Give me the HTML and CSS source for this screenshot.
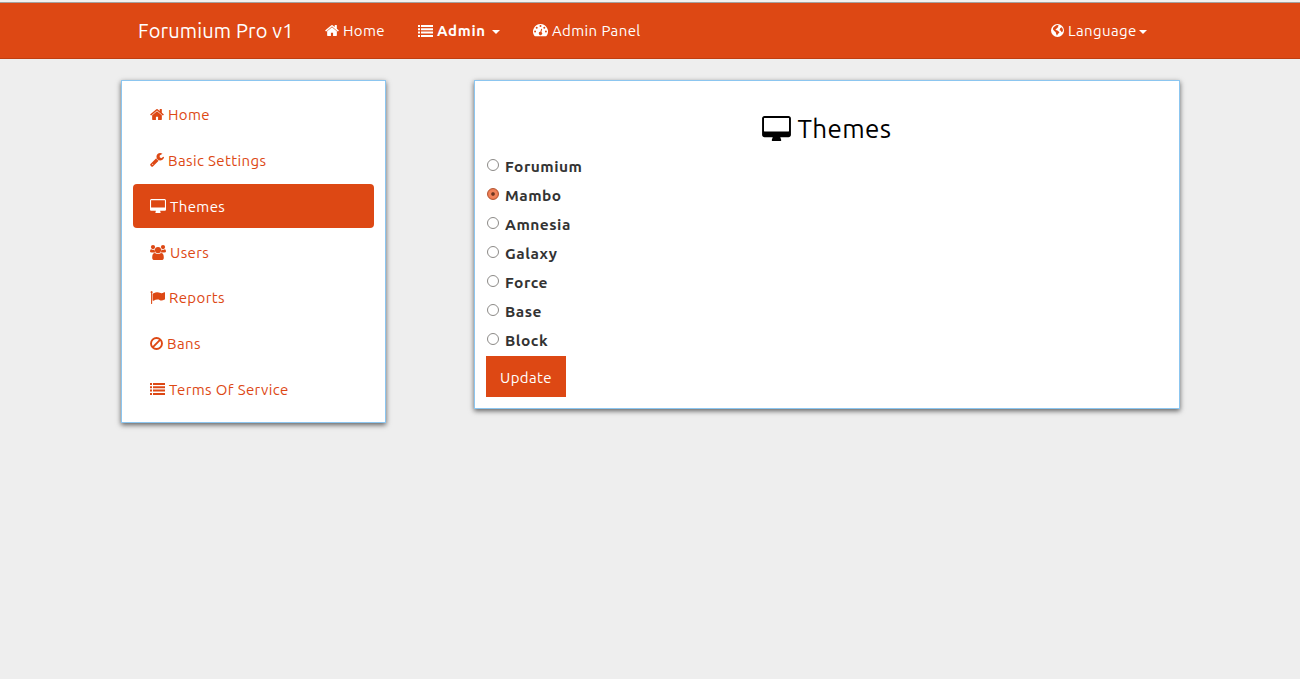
FILE: index.html
```html
<!DOCTYPE html>
<html lang="en">
<head>
<meta charset="utf-8">
<title>Forumium Pro v1 - Themes</title>
<link rel="stylesheet" href="styles.css">
</head>
<body>
<svg class="sprite" aria-hidden="true">
  <symbol id="home" viewBox="64 128 1664 1536"><path d="M1472 992v480q0 26-19 45t-45 19h-384v-384h-256v384h-384q-26 0-45-19t-19-45v-480q0-1 .5-3t.5-3l575-474 575 474q1 2 1 6zm223-69l-62 74q-8 9-21 11h-3q-13 0-21-7l-692-577-692 577q-12 8-24 7-13-2-21-11l-62-74q-8-10-7-23.5t11-21.5l719-599q32-26 76-26t76 26l244 204v-195q0-14 9-23t23-9h192q14 0 23 9t9 23v408l219 182q10 8 11 21.5t-7 23.5z"/></symbol>
  <symbol id="wrench" viewBox="64 128 1664 1664"><path d="M448 1472q0-26-19-45t-45-19-45 19-19 45 19 45 45 19 45-19 19-45zm644-420l-682 682q-37 37-90 37-52 0-91-37l-106-108q-38-36-38-90 0-53 38-91l681-681q39 98 114.5 173.5t173.5 114.5zm634-435q0 39-23 106-47 134-164.5 217.5t-258.5 83.5q-185 0-316.5-131.5t-131.5-316.5 131.5-316.5 316.5-131.5q58 0 121.5 16.5t107.5 46.5q16 11 16 28t-16 28l-293 169v224l193 107q5-3 79-48.5t135.5-81 70.5-35.5q15 0 23.5 10t8.5 25z"/></symbol>
  <symbol id="desktop" viewBox="0 0 1920 1664"><path d="M1792 992v-832q0-13-9.500-22.500t-22.500-9.500h-1600q-13 0-22.500 9.500t-9.500 22.500v832q0 13 9.500 22.500t22.500 9.500h1600q13 0 22.500-9.500t9.500-22.500zm128-832v1088q0 66-47 113t-113 47h-544q0 37 16 77.500t32 71 16 43.500q0 26-19 45t-45 19h-512q-26 0-45-19t-19-45q0-14 16-44t32-70 16-78h-544q-66 0-113-47t-47-113v-1088q0-66 47-113t113-47h1600q66 0 113 47t47 113z"/></symbol>
  <symbol id="users" viewBox="0 0 16 15"><circle cx="3" cy="2.100" r="2.100"/><circle cx="13" cy="2.100" r="2.100"/><path d="M0 6.500Q0 4.300 1.200 4.300Q3 5.500 4.500 4.600Q4.600 6.500 5.600 7.500H1.700Q0 7.500 0 6.500zM16 6.500Q16 4.300 14.800 4.300Q13 5.500 11.500 4.600Q11.400 6.500 10.400 7.500H14.300Q16 7.500 16 6.500z"/><circle cx="8" cy="5.100" r="3.100"/><path d="M2.200 12.400Q2.200 8 4.900 8Q8 10 11.100 8Q13.800 8 13.800 12.400Q13.800 15 11.400 15H4.600Q2.200 15 2.200 12.400z"/></symbol>
  <symbol id="flag" viewBox="0 128 1792 1536"><path d="M320 256q0 72-64 110v1266q0 13-9.500 22.500t-22.500 9.500h-64q-13 0-22.500-9.500t-9.500-22.500v-1266q-64-38-64-110 0-53 37.500-90.500t90.500-37.500 90.500 37.500 37.500 90.500zm1472 64v763q0 25-12.500 38.500t-39.500 27.500q-215 116-369 116-61 0-123.500-22t-108.500-48-115.500-48-142.500-22q-192 0-464 146-17 9-33 9-26 0-45-19t-19-45v-742q0-32 31-55 21-14 79-43 236-120 421-120 107 0 200 29t219 88q38 19 88 19 54 0 117.500-21t110-47 88-47 54.500-21q26 0 45 19t19 45z"/></symbol>
  <symbol id="ban" viewBox="0 0 13 13"><g fill="none" stroke="currentColor" stroke-width="1.900"><circle cx="6.500" cy="6.500" r="5.500"/><path d="M2.700 10.300 10.300 2.700"/></g></symbol>
  <symbol id="list" viewBox="0 0 15 12"><path d="M0 0h2v2H0zM3 0h12v2H3zM0 3.300h2v2H0zM3 3.300h12v2H3zM0 6.600h2v2H0zM3 6.600h12v2H3zM0 10h2v2H0zM3 10h12v2H3z"/></symbol>
  <symbol id="gauge" viewBox="0 0 15 12.500"><path fill-rule="evenodd" d="M7.500 0A7.500 7.500 0 0 1 13.800 11.500Q13.300 12.500 12.700 12.500H2.300Q1.700 12.500 1.200 11.500A7.500 7.500 0 0 1 7.500 0zM2.100 6.500a1 1 0 1 0 0 2 1 1 0 0 0 0-2zM3.700 2.800a1 1 0 1 0 0 2 1 1 0 0 0 0-2zM7.500 1.100a1 1 0 1 0 0 2 1 1 0 0 0 0-2zM11.300 2.800a1 1 0 1 0 0 2 1 1 0 0 0 0-2zM12.900 6.500a1 1 0 1 0 0 2 1 1 0 0 0 0-2zM8.200 4.700 7.400 7.800A1.600 1.600 0 1 0 8.400 8.100L9.200 5z"/></symbol>
  <symbol id="globe" viewBox="0 0 13 13"><path fill-rule="evenodd" d="M6.500 0a6.500 6.500 0 1 1 0 13 6.500 6.500 0 0 1 0-13zM5.200 1.300 6.500 1 7.800 1.500 6.900 2.300 7.500 3.100 6 4 5.300 5 4.400 5.700 5.300 6.300 6 6.300 7.400 7.200 8.500 8.200 7.400 9.500 6.400 10.700 6 11.800 5.100 9.700 4.600 8 3.200 6.900 1.900 5.200 2.200 3.800 3.500 2.400zM9.100 4.300 10.400 3.200 11.500 4.500 12 6.300 11.300 8.100 10.500 8.300 9.900 6.800 8.500 6.300z"/></symbol>
  <symbol id="caret" viewBox="0 0 8 4"><path d="M0 0h8L4 4z"/></symbol>
</svg>
<header class="navbar">
  <a class="brand">Forumium Pro v1</a>
  <a class="link"><svg class="i-home"><use href="#home"/></svg><span>Home</span></a>
  <a class="link strong"><svg class="i-list"><use href="#list"/></svg><span>Admin</span><svg class="caret spaced"><use href="#caret"/></svg></a>
  <a class="link"><svg class="i-gauge"><use href="#gauge"/></svg><span>Admin Panel</span></a>
  <a class="link"><svg class="i-globe"><use href="#globe"/></svg><span>Language</span><svg class="caret"><use href="#caret"/></svg></a>
</header>
<main class="layout">
  <nav class="card sidebar">
    <a class="item"><svg class="i-home"><use href="#home"/></svg><span>Home</span></a>
    <a class="item"><svg class="i-wrench"><use href="#wrench"/></svg><span>Basic Settings</span></a>
    <a class="item active"><svg class="i-desktop"><use href="#desktop"/></svg><span>Themes</span></a>
    <a class="item"><svg class="i-users"><use href="#users"/></svg><span>Users</span></a>
    <a class="item"><svg class="i-flag"><use href="#flag"/></svg><span>Reports</span></a>
    <a class="item"><svg class="i-ban"><use href="#ban"/></svg><span>Bans</span></a>
    <a class="item"><svg class="i-list"><use href="#list"/></svg><span>Terms Of Service</span></a>
  </nav>
  <section class="card content">
    <h1 class="title"><svg class="i-title"><use href="#desktop"/></svg><span>Themes</span></h1>
    <form class="themes">
      <label class="option"><input class="radio" type="radio" name="theme"><span>Forumium</span></label>
      <label class="option"><input class="radio" type="radio" name="theme" checked><span>Mambo</span></label>
      <label class="option"><input class="radio" type="radio" name="theme"><span>Amnesia</span></label>
      <label class="option"><input class="radio" type="radio" name="theme"><span>Galaxy</span></label>
      <label class="option"><input class="radio" type="radio" name="theme"><span>Force</span></label>
      <label class="option"><input class="radio" type="radio" name="theme"><span>Base</span></label>
      <label class="option"><input class="radio" type="radio" name="theme"><span>Block</span></label>
      <button class="update" type="button">Update</button>
    </form>
  </section>
</main>
</body>
</html>
```
FILE: styles.css
```css
* { box-sizing: border-box; }
body {
  margin: 0;
  min-height: 679px;
  background: #eee;
  border-top: 2px solid #f2f1f0;
  font: 15px/21px Ubuntu, "Noto Sans", sans-serif;
  letter-spacing: .38px;
  color: #333;
}
svg { display: block; flex: none; fill: currentColor; }
.sprite { display: none; }
.navbar {
  height: 57px;
  padding-left: 138px;
  display: grid;
  grid-template-columns: 187px 93px 115px 518px auto;
  align-items: center;
  background: #dd4814;
  border-top: 1px solid #a5a29f;
  border-bottom: 1px solid #bf3e11;
  color: #fff;
  white-space: nowrap;
}
.brand { font-size: 20px; letter-spacing: .15px; }
.link { display: flex; align-items: center; gap: 4px; }
.strong { font-weight: bold; letter-spacing: .7px; }
.caret { width: 8px; height: 4px; margin: 3px 0 0 -2px; }
.spaced { margin-left: 2px; }
.i-home { width: 14px; height: 13px; }
.i-wrench { width: 14px; height: 14px; }
.i-desktop { width: 16px; height: 14px; }
.i-users { width: 16px; height: 15px; }
.i-flag { width: 15px; height: 13px; }
.i-ban, .i-globe { width: 13px; height: 13px; }
.i-list { width: 15px; height: 12px; }
.i-gauge { width: 15px; height: 12.5px; }
.layout {
  display: grid;
  grid-template-columns: 265px 706px;
  column-gap: 88px;
  align-items: start;
  padding: 21px 0 0 121px;
}
.card {
  background: #fff;
  border: 1px solid #8cc6f0;
  padding: 11px;
  box-shadow: 0 2px 5px rgba(0, 0, 0, .6);
}
.sidebar { height: 343px; padding-top: 11.3px; display: flex; flex-direction: column; gap: 2px; }
.item {
  flex: none;
  height: 43.8px;
  padding: 1px 0 0 17px;
  display: flex;
  align-items: center;
  gap: 4px;
  color: #dd4814;
  border-radius: 4px;
}
.active { background: #dd4814; color: #fff; }
.content { height: 329px; }
.title {
  margin: 21px 0 8px;
  height: 31px;
  display: flex;
  justify-content: center;
  align-items: center;
  gap: 6px;
  font-size: 26px;
  font-weight: normal;
  line-height: 31px;
  color: #000;
}
.i-title { width: 29px; height: 25px; }
.themes { display: flex; flex-direction: column; align-items: flex-start; }
.option {
  height: 29px;
  display: flex;
  align-items: center;
  gap: 6px;
  padding: 0 0 0 1px;
  font-size: 15.5px;
  font-weight: bold;
  letter-spacing: .5px;
}
.radio {
  appearance: none;
  width: 12px;
  height: 12px;
  margin: 0 0 3px;
  border: 1px solid #8c8a87;
  border-radius: 50%;
  background: #fff;
}
.radio:checked { border-color: #b4532f; background: radial-gradient(circle, #6d3520 0 1.3px, #f0835a 2.3px 3.6px, #e0683f); }
.update {
  width: 80px;
  height: 41px;
  margin-top: 1px;
  padding: 1px 0 0;
  border: 0;
  background: #dd4814;
  color: #fff;
  font: inherit;
  letter-spacing: .35px;
}
```
